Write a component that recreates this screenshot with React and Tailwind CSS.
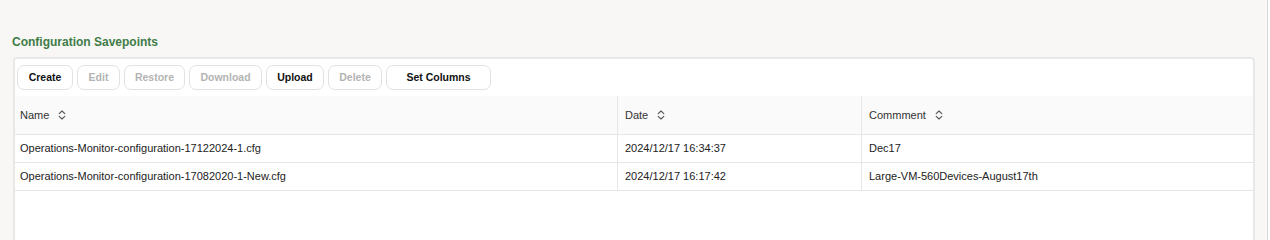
import React from 'react';

const buttons = [
  { label: 'Create', w: 'w-[56px]', enabled: true },
  { label: 'Edit', w: 'w-[43px]', enabled: false },
  { label: 'Restore', w: 'w-[61px]', enabled: false },
  { label: 'Download', w: 'w-[73px]', enabled: false },
  { label: 'Upload', w: 'w-[58px]', enabled: true },
  { label: 'Delete', w: 'w-[54px]', enabled: false },
  { label: 'Set Columns', w: 'w-[105px]', enabled: true },
];

const rows = [
  {
    name: 'Operations-Monitor-configuration-17122024-1.cfg',
    date: '2024/12/17 16:34:37',
    comment: 'Dec17',
  },
  {
    name: 'Operations-Monitor-configuration-17082020-1-New.cfg',
    date: '2024/12/17 16:17:42',
    comment: 'Large-VM-560Devices-August17th',
  },
];

const SortIcon = () => (
  <svg width="8" height="10" viewBox="0 0 8 10" className="ml-[9px] text-[#555]" fill="none">
    <path d="M1.2 3.6 L4 1 L6.8 3.6" stroke="currentColor" strokeWidth="1.1" strokeLinecap="round" strokeLinejoin="round" />
    <path d="M1.2 6.4 L4 9 L6.8 6.4" stroke="currentColor" strokeWidth="1.1" strokeLinecap="round" strokeLinejoin="round" />
  </svg>
);

const HeaderCell = ({ label, className }) => (
  <div className={`flex items-center h-full ${className}`}>
    <span>{label}</span>
    <SortIcon />
  </div>
);

const App = () => {
  return (
    <div
      className="w-[1270px] h-[240px] bg-[#f8f7f5] overflow-hidden flex"
      style={{ fontFamily: '"Liberation Sans", Arial, sans-serif' }}
    >
      <div className="w-[1267px] pl-[12px] pt-[35px]">
        <h2 className="text-[12px] leading-[15px] font-bold text-[#3f7c47]">Configuration Savepoints</h2>

        <div className="mt-[7px] ml-[1px] w-[1242px] h-[200px] border-2 border-b-0 border-[#e8e8e8] rounded-t-[4px] bg-white">
          <div className="flex gap-[4px] pl-[2px] pt-[6px] pb-[6px]">
            {buttons.map((b) => (
              <button
                key={b.label}
                className={`${b.w} h-[25px] rounded-[7px] border border-[#e2e2e2] bg-white text-[10.5px] font-bold ${
                  b.enabled ? 'text-[#111]' : 'text-[#b3b3b3]'
                }`}
              >
                {b.label}
              </button>
            ))}
          </div>

          <div className="text-[11px] text-[#222]">
            <div className="flex h-[39px] bg-[#fafafa] border-b border-[#e6e6e6] text-[#333]">
              <HeaderCell label="Name" className="w-[603px] pl-[5px] border-r border-[#e6e6e6]" />
              <HeaderCell label="Date" className="w-[244px] pl-[7px] border-r border-[#e6e6e6]" />
              <HeaderCell label="Commment" className="flex-1 pl-[7px]" />
            </div>
            {rows.map((r) => (
              <div key={r.name} className="flex h-[28px] border-b border-[#e6e6e6]">
                <div className="w-[603px] pl-[5px] flex items-center border-r border-[#e6e6e6]">{r.name}</div>
                <div className="w-[244px] pl-[7px] flex items-center border-r border-[#e6e6e6]">{r.date}</div>
                <div className="flex-1 pl-[7px] flex items-center">{r.comment}</div>
              </div>
            ))}
          </div>
        </div>
      </div>
      <div className="w-px h-full bg-[#d9d9d9]" />
      <div className="flex-1 bg-white" />
    </div>
  );
};

export default App;
